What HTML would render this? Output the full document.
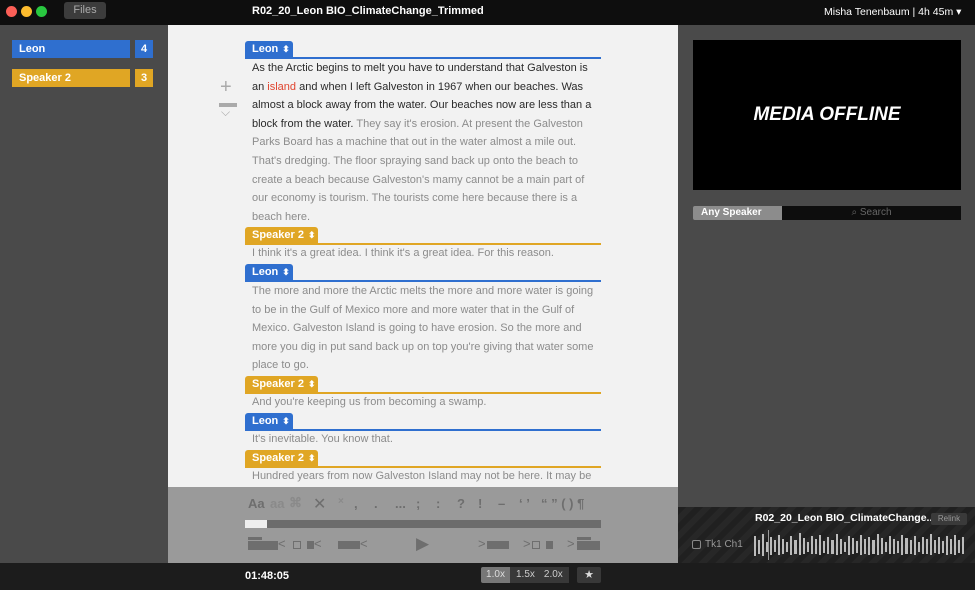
<!DOCTYPE html>
<html><head><meta charset="utf-8"><style>
*{margin:0;padding:0;box-sizing:border-box}
body{width:975px;height:590px;overflow:hidden;background:#4a4a4a;font-family:"Liberation Sans",sans-serif;position:relative}
.a{position:absolute}
.top{left:0;top:0;width:975px;height:25px;background:#0e0e0e}
.dot{top:6px;width:11px;height:11px;border-radius:50%}
.main{left:168px;top:25px;width:510px;height:462px;background:#f2f2f2;overflow:hidden}
.tag{position:absolute;left:77px;height:17px;border-radius:3px 3px 0 0;color:#fff;font-weight:bold;font-size:11px;line-height:17px;padding-left:7px}
.rule{position:absolute;left:77px;width:356px;height:2px}
.b{background:#2f6fcf}.y{background:#e0a624}
.txt{position:absolute;left:84px;width:342px;font-size:11px;line-height:18.6px;color:#8c8c8c}
.dk{color:#2a2a2a}
.chev{font-size:9px;margin-left:4px}
.sp{left:12px;height:18px;color:#fff;font-weight:bold;font-size:11px;line-height:18px;padding-left:7px}
.ctl{left:168px;top:487px;width:510px;height:76px;background:#9a9a9a}
.bot{left:0;top:563px;width:975px;height:27px;background:#1c1c1c}
.ic{position:absolute;color:#6e6e6e;font-size:13px;font-weight:bold}
.bar{position:absolute;background:#6e6e6e}
</style></head><body>
<div class="a top"></div>
<div class="a dot" style="left:6px;background:#fc5f57"></div>
<div class="a dot" style="left:21px;background:#fdbc2e"></div>
<div class="a dot" style="left:36px;background:#29c840"></div>
<div class="a" style="left:64px;top:2px;width:42px;height:17px;background:#3c3c3c;border-radius:3px;color:#aaa;font-size:11px;text-align:center;line-height:17px">Files</div>
<div class="a" style="left:252px;top:5px;color:#fff;font-weight:bold;font-size:11px">R02_20_Leon BIO_ClimateChange_Trimmed</div>
<div class="a" style="left:824px;top:6px;color:#fff;font-size:10.5px">Misha Tenenbaum | 4h 45m ▾</div>

<div class="a sp b" style="top:40px;width:118px">Leon</div>
<div class="a b" style="left:135px;top:40px;width:18px;height:18px;color:#fff;font-weight:bold;font-size:11px;text-align:center;line-height:18px">4</div>
<div class="a sp y" style="top:69px;width:118px">Speaker 2</div>
<div class="a y" style="left:135px;top:69px;width:18px;height:18px;color:#fff;font-weight:bold;font-size:11px;text-align:center;line-height:18px">3</div>

<div class="a main">
<div class="a" style="left:52px;top:53px;color:#aaa;font-size:20px;line-height:18px">+</div>
<div class="a" style="left:51px;top:78px;width:18px;height:4px;background:#aaa"></div>
<div class="a" style="left:53px;top:80px;color:#aaa;font-size:12px">⌵</div>

<div class="tag b" style="top:16px;width:48px">Leon<span class="chev">⬍</span></div><div class="rule b" style="top:32px"></div>
<div class="txt" style="top:34px"><span class="dk">As the Arctic begins to melt you have to understand that Galveston is an <span style="color:#e0442e">island</span> and when I left Galveston in 1967 when our beaches. Was almost a block away from the water. Our beaches now are less than a block from the water.</span> They say it's erosion. At present the Galveston Parks Board has a machine that out in the water almost a mile out. That's dredging. The floor spraying sand back up onto the beach to create a beach because Galveston's mamy cannot be a main part of our economy is tourism. The tourists come here because there is a beach here.</div>
<div class="tag y" style="top:202px;width:73px">Speaker 2<span class="chev">⬍</span></div><div class="rule y" style="top:218px"></div>
<div class="txt" style="top:219px">I think it's a great idea. I think it's a great idea. For this reason.</div>
<div class="tag b" style="top:239px;width:48px">Leon<span class="chev">⬍</span></div><div class="rule b" style="top:255px"></div>
<div class="txt" style="top:257px">The more and more the Arctic melts the more and more water is going to be in the Gulf of Mexico more and more water that in the Gulf of Mexico. Galveston Island is going to have erosion. So the more and more you dig in put sand back up on top you're giving that water some place to go.</div>
<div class="tag y" style="top:351px;width:73px">Speaker 2<span class="chev">⬍</span></div><div class="rule y" style="top:367px"></div>
<div class="txt" style="top:368px">And you're keeping us from becoming a swamp.</div>
<div class="tag b" style="top:388px;width:48px">Leon<span class="chev">⬍</span></div><div class="rule b" style="top:404px"></div>
<div class="txt" style="top:405px">It's inevitable. You know that.</div>
<div class="tag y" style="top:425px;width:73px">Speaker 2<span class="chev">⬍</span></div><div class="rule y" style="top:441px"></div>
<div class="txt" style="top:442px">Hundred years from now Galveston Island may not be here. It may be</div>
</div>

<div class="a ctl">
<div class="ic" style="left:80px;top:9px">Aa</div>
<div class="ic" style="left:102px;top:9px;color:#8a8a8a">aa</div>
<div class="ic" style="left:121px;top:8px;color:#8a8a8a">⌘</div>
<div class="ic" style="left:145px;top:7px;font-weight:normal;font-size:16px">✕</div>
<div class="ic" style="left:170px;top:9px;color:#8a8a8a;font-size:10px">×</div>
<div class="ic" style="left:186px;top:9px">,</div>
<div class="ic" style="left:206px;top:9px">.</div>
<div class="ic" style="left:227px;top:9px">...</div>
<div class="ic" style="left:248px;top:9px">;</div>
<div class="ic" style="left:268px;top:9px">:</div>
<div class="ic" style="left:289px;top:9px">?</div>
<div class="ic" style="left:310px;top:9px">!</div>
<div class="ic" style="left:330px;top:9px">–</div>
<div class="ic" style="left:351px;top:9px">‘ ’</div>
<div class="ic" style="left:373px;top:9px">“ ” ( ) ¶</div>
<div class="a" style="left:77px;top:33px;width:356px;height:8px;background:#6c6c6c"></div>
<div class="a" style="left:77px;top:33px;width:22px;height:8px;background:#eee"></div>
<!-- transport icons -->
<div class="bar" style="left:80px;top:50px;width:14px;height:3px"></div>
<div class="bar" style="left:80px;top:54px;width:30px;height:9px"></div>
<div class="ic" style="left:110px;top:49px;font-weight:normal">&lt;</div>
<div class="a" style="left:125px;top:54px;width:8px;height:8px;border:1px solid #6e6e6e"></div>
<div class="bar" style="left:139px;top:54px;width:7px;height:8px"></div>
<div class="ic" style="left:146px;top:49px;font-weight:normal">&lt;</div>
<div class="bar" style="left:170px;top:54px;width:22px;height:8px"></div>
<div class="ic" style="left:192px;top:49px;font-weight:normal">&lt;</div>
<div class="ic" style="left:248px;top:47px;font-size:17px;font-weight:normal">▶</div>
<div class="ic" style="left:310px;top:49px;font-weight:normal">&gt;</div>
<div class="bar" style="left:319px;top:54px;width:22px;height:8px"></div>
<div class="ic" style="left:355px;top:49px;font-weight:normal">&gt;</div>
<div class="a" style="left:364px;top:54px;width:8px;height:8px;border:1px solid #6e6e6e"></div>
<div class="bar" style="left:378px;top:54px;width:7px;height:8px"></div>
<div class="ic" style="left:399px;top:49px;font-weight:normal">&gt;</div>
<div class="bar" style="left:409px;top:50px;width:14px;height:3px"></div>
<div class="bar" style="left:409px;top:54px;width:23px;height:9px"></div>
</div>

<div class="a" style="left:693px;top:40px;width:268px;height:150px;background:#000;color:#fff;font-weight:bold;font-style:italic;font-size:19px;text-align:center;line-height:150px">MEDIA OFFLINE</div>
<div class="a" style="left:693px;top:206px;width:89px;height:14px;background:#8c8c8c;border-radius:2px 0 0 2px;color:#fff;font-weight:bold;font-size:10px;line-height:14px;padding-left:8px">Any Speaker</div>
<div class="a" style="left:782px;top:206px;width:179px;height:14px;background:#0d0d0d;color:#666;font-size:10px;line-height:14px;text-align:center">⌕ Search</div>

<div class="a" style="left:678px;top:507px;width:297px;height:56px;background:repeating-linear-gradient(135deg,#202020 0 6px,#272727 6px 12px)"></div>
<div class="a" style="left:755px;top:512px;color:#fff;font-weight:bold;font-size:10.5px">R02_20_Leon BIO_ClimateChange...</div>
<div class="a" style="left:931px;top:513px;width:36px;height:12px;background:#3a3a3a;border-radius:2px;color:#999;font-size:8px;text-align:center;line-height:12px">Relink</div>
<div class="a" style="left:692px;top:540px;width:9px;height:9px;border:1px solid #888;border-radius:2px"></div>
<div class="a" style="left:705px;top:539px;color:#999;font-size:10px">Tk1 Ch1</div>
<svg class="a" style="left:754px;top:530px" width="214" height="30"><g fill="#bbb">
<rect x="0" y="6" width="2" height="20"/><rect x="4" y="10" width="2" height="14"/><rect x="8" y="4" width="2" height="22"/><rect x="12" y="12" width="2" height="10"/><rect x="16" y="7" width="2" height="18"/><rect x="20" y="10" width="2" height="12"/><rect x="24" y="5" width="2" height="20"/><rect x="28" y="9" width="2" height="15"/><rect x="32" y="12" width="2" height="10"/><rect x="36" y="6" width="2" height="19"/><rect x="40" y="10" width="3" height="14"/><rect x="45" y="3" width="2" height="22"/><rect x="49" y="8" width="2" height="16"/><rect x="53" y="12" width="2" height="10"/><rect x="57" y="6" width="2" height="18"/><rect x="61" y="9" width="2" height="15"/><rect x="65" y="5" width="2" height="20"/><rect x="69" y="11" width="2" height="12"/><rect x="73" y="7" width="2" height="17"/><rect x="77" y="10" width="3" height="14"/><rect x="82" y="4" width="2" height="21"/><rect x="86" y="9" width="2" height="15"/><rect x="90" y="12" width="2" height="10"/><rect x="94" y="6" width="2" height="19"/><rect x="98" y="8" width="2" height="16"/><rect x="102" y="11" width="2" height="12"/><rect x="106" y="5" width="2" height="20"/><rect x="110" y="9" width="2" height="15"/><rect x="114" y="7" width="2" height="18"/><rect x="118" y="10" width="3" height="14"/><rect x="123" y="4" width="2" height="21"/><rect x="127" y="8" width="2" height="16"/><rect x="131" y="12" width="2" height="10"/><rect x="135" y="6" width="2" height="18"/><rect x="139" y="9" width="2" height="15"/><rect x="143" y="11" width="2" height="12"/><rect x="147" y="5" width="2" height="20"/><rect x="151" y="8" width="3" height="16"/><rect x="156" y="10" width="2" height="14"/><rect x="160" y="6" width="2" height="19"/><rect x="164" y="12" width="2" height="10"/><rect x="168" y="7" width="2" height="17"/><rect x="172" y="9" width="2" height="15"/><rect x="176" y="4" width="2" height="21"/><rect x="180" y="10" width="2" height="13"/><rect x="184" y="7" width="2" height="17"/><rect x="188" y="11" width="2" height="12"/><rect x="192" y="6" width="2" height="19"/><rect x="196" y="9" width="2" height="15"/><rect x="200" y="5" width="2" height="20"/><rect x="204" y="10" width="2" height="13"/><rect x="208" y="7" width="2" height="17"/>
</g><rect x="14" y="0" width="1" height="30" fill="#999"/></svg>

<div class="a bot"></div>
<div class="a" style="left:245px;top:570px;color:#fff;font-weight:bold;font-size:11px">01:48:05</div>
<div class="a" style="left:481px;top:567px;width:29px;height:16px;background:#777;border-radius:2px 0 0 2px;color:#ddd;font-size:10px;text-align:center;line-height:16px">1.0x</div>
<div class="a" style="left:510px;top:567px;width:59px;height:16px;background:#383838;color:#ccc;font-size:10px;line-height:16px"><span style="margin-left:6px">1.5x</span><span style="margin-left:9px">2.0x</span></div>
<div class="a" style="left:577px;top:567px;width:24px;height:16px;background:#383838;border-radius:2px;color:#ddd;font-size:11px;text-align:center;line-height:16px">★</div>
</body></html>
